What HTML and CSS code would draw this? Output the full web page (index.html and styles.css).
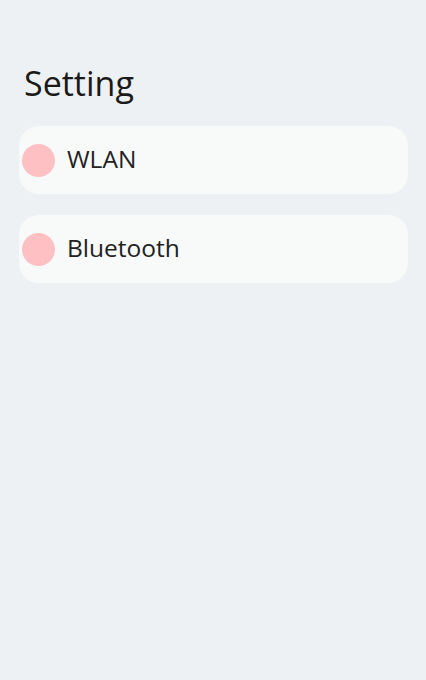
FILE: index.html
```html
<!DOCTYPE html>
<html>
<head>
<meta charset="utf-8">
<link rel="stylesheet" href="styles.css">
</head>
<body>
<div class="page">
  <h1 class="title">Setting</h1>
  <div class="list">
    <div class="item"><span class="dot"></span><span class="label">WLAN</span></div>
    <div class="item"><span class="dot"></span><span class="label">Bluetooth</span></div>
  </div>
</div>
</body>
</html>
```
FILE: styles.css
```css
html, body {
  margin: 0;
  padding: 0;
  background: #eef1f3;
  height: 100%;
}
.page {
  padding: 61px 18px 0 19px;
  font-family: "Open Sans", sans-serif;
  color: #1a1a1a;
}
.title {
  margin: 0 0 0 5px;
  font-size: 34px;
  font-weight: 400;
  line-height: 44px;
  height: 65px;
}
.list {
  display: flex;
  flex-direction: column;
  gap: 21px;
}
.item {
  display: flex;
  align-items: center;
  height: 68px;
  background: #f8f9f9;
  border-radius: 20px;
  padding-left: 3px;
}
.dot {
  width: 33px;
  height: 33px;
  border-radius: 50%;
  background: #ffc0c3;
  flex: none;
}
.label {
  margin-left: 12px;
  font-size: 24.5px;
  line-height: 30px;
  padding-bottom: 3px;
  color: #222;
}
```
